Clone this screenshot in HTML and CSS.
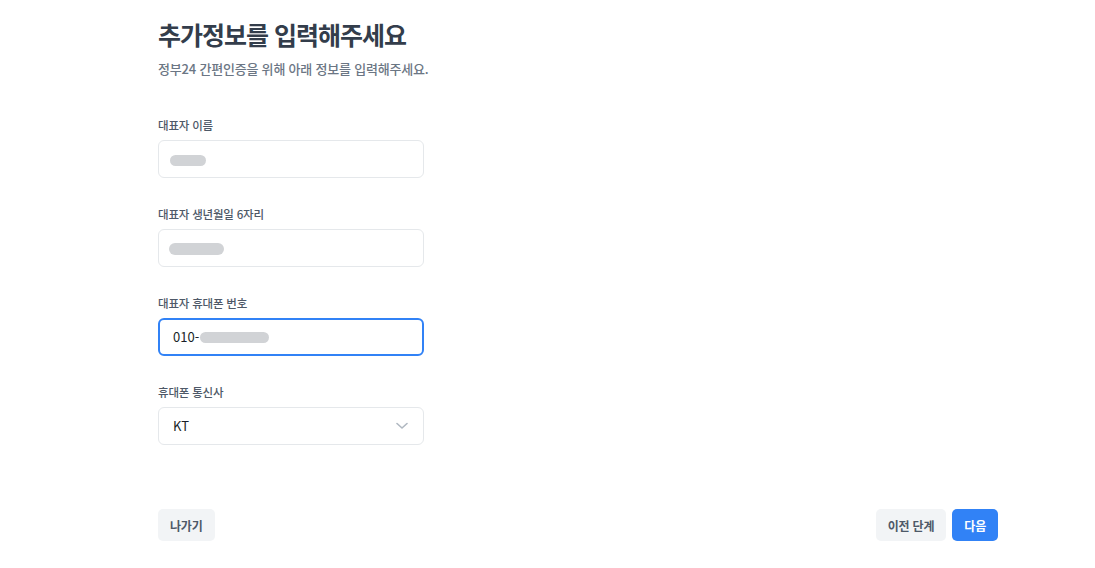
FILE: index.html
```html
<!DOCTYPE html>
<html lang="ko">
<head>
<meta charset="utf-8">
<title>추가정보 입력</title>
<link rel="stylesheet" href="styles.css">
</head>
<body>
<div class="page">
  <h1 class="title">추가정보를 입력해주세요</h1>
  <p class="subtitle">정부24 간편인증을 위해 아래 정보를 입력해주세요.</p>
  <div class="form">
    <div class="field">
      <label class="label">대표자 이름</label>
      <div class="input"><span class="redact r1"></span></div>
    </div>
    <div class="field">
      <label class="label">대표자 생년월일 6자리</label>
      <div class="input"><span class="redact r2"></span></div>
    </div>
    <div class="field">
      <label class="label">대표자 휴대폰 번호</label>
      <div class="input focused"><span class="value">010-</span><span class="redact r3"></span></div>
    </div>
    <div class="field">
      <label class="label">휴대폰 통신사</label>
      <div class="input select"><span class="value">KT</span>
        <svg class="chev" width="12" height="8" viewBox="0 0 12 8"><path d="M1 1.5 L6 6 L11 1.5" fill="none" stroke="#b0b8c1" stroke-width="1.6" stroke-linecap="round" stroke-linejoin="round"/></svg>
      </div>
    </div>
  </div>
  <div class="actions">
    <button class="btn gray">나가기</button>
    <div class="right">
      <button class="btn gray">이전 단계</button>
      <button class="btn blue">다음</button>
    </div>
  </div>
</div>
</body>
</html>
```
FILE: styles.css
```css
* { box-sizing: border-box; }
html, body { margin: 0; padding: 0; background: #fff; }
body {
  font-family: "Noto Sans CJK KR", "Noto Sans", sans-serif;
  color: #191f28;
}
.page {
  width: 840px;
  margin-left: 158px;
  padding-top: 16px;
}
.title {
  margin: 0;
  font-size: 25px;
  line-height: 36px;
  font-weight: 700;
  color: #333d4b;
  letter-spacing: -1px;
}
.subtitle {
  margin: 7px 0 0;
  font-size: 13px;
  line-height: 20px;
  color: #6b7684;
  font-weight: 500;
  letter-spacing: -0.2px;
}
.form {
  margin-top: 37px;
  width: 266px;
  display: flex;
  flex-direction: column;
  gap: 27px;
}
.field {
  display: flex;
  flex-direction: column;
  gap: 6px;
}
.label {
  font-size: 11.5px;
  line-height: 18px;
  font-weight: 500;
  color: #4e5968;
  letter-spacing: -0.2px;
}
.input {
  height: 38px;
  border: 1px solid #e5e8eb;
  border-radius: 6px;
  display: flex;
  align-items: center;
  padding: 0 14px;
  font-size: 13px;
  color: #191f28;
}
.input.focused {
  border: 2px solid #3182f6;
  padding: 0 13px;
}
.select { justify-content: space-between; }
.chev { margin-right: 1px; }
.value { line-height: 18px; }
.redact {
  display: inline-block;
  height: 11px;
  background: #d1d3d6;
  border-radius: 6px;
  filter: blur(0.6px);
}
.r1 { width: 36px; margin-left: -3px; margin-top: 2px; }
.r2 { width: 55px; margin-left: -4px; height: 12px; margin-top: 2px; }
.r3 { width: 69px; margin-left: 1px; margin-top: 1px; }
.actions {
  margin-top: 64px;
  display: flex;
  justify-content: space-between;
  align-items: center;
}
.right { display: flex; gap: 6px; }
.btn {
  height: 32px;
  border: none;
  border-radius: 5px;
  padding: 0 12px;
  font-family: inherit;
  font-size: 12px;
  font-weight: 700;
  letter-spacing: -0.2px;
  cursor: pointer;
}
.btn.gray { background: #f2f4f6; color: #4e5968; }
.btn.blue { background: #3182f6; color: #fff; }
```
